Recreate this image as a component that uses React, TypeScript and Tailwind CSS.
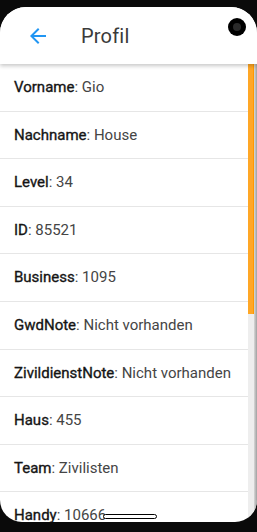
const rows: [string, string][] = [
  ["Vorname", "Gio"],
  ["Nachname", "House"],
  ["Level", "34"],
  ["ID", "85521"],
  ["Business", "1095"],
  ["GwdNote", "Nicht vorhanden"],
  ["ZivildienstNote", "Nicht vorhanden"],
  ["Haus", "455"],
  ["Team", "Zivilisten"],
  ["Handy", "10666"],
];

export default function App() {
  return (
    <div
      className="relative w-[257px] h-[532px] bg-[#0a0a0a] overflow-hidden"
      style={{ fontFamily: "Roboto, 'Noto Sans', sans-serif" }}
    >
      <div className="mt-[7px] h-[515px] bg-white rounded-t-[26px] rounded-b-[22px] overflow-hidden flex flex-col">
        <header className="relative z-10 h-[57px] shrink-0 flex items-center bg-white shadow-[0_2px_4px_rgba(0,0,0,0.22)]">
          <svg width="24" height="24" viewBox="0 0 24 24" className="ml-[26px] text-[#2196f3]" fill="currentColor">
            <path d="M20 11H7.83l5.59-5.59L12 4l-8 8 8 8 1.41-1.41L7.83 13H20v-2z" />
          </svg>
          <h1 className="ml-[31px] text-[20px] text-[#3a3a3a] tracking-[0.2px]">Profil</h1>
        </header>
        <div className="flex flex-1 min-h-0">
          <div className="flex-1 min-w-0">
            {rows.map(([k, v]) => (
              <div
                key={k}
                className="h-[47.6px] shrink-0 flex items-center pl-[14px] border-b border-[#e6e6e6] text-[15px] whitespace-nowrap"
              >
                <span className="text-[#151515] [-webkit-text-stroke:0.35px_#151515]">{k}</span>
                <span className="text-[#454545]">: {v}</span>
              </div>
            ))}
          </div>
          <div className="w-[6px] flex flex-col bg-[#eeeeee]">
            <div className="h-[250px] bg-[#ffa726] shadow-[inset_-1px_0_0_#ff9800]" />
          </div>
          <div className="w-[3px] bg-gradient-to-r from-[#d8d8d8] to-[#a0a0a0]" />
        </div>
      </div>
      <div className="absolute z-20 left-[228px] top-[18px] w-[18px] h-[18px] rounded-full bg-black flex items-center justify-center">
        <div className="w-[8px] h-[8px] rounded-full bg-[#2a2a2a]" />
      </div>
      <div className="absolute z-20 left-[103px] top-[514px] w-[54px] h-[5px] rounded-full bg-white border border-black" />
    </div>
  );
}
